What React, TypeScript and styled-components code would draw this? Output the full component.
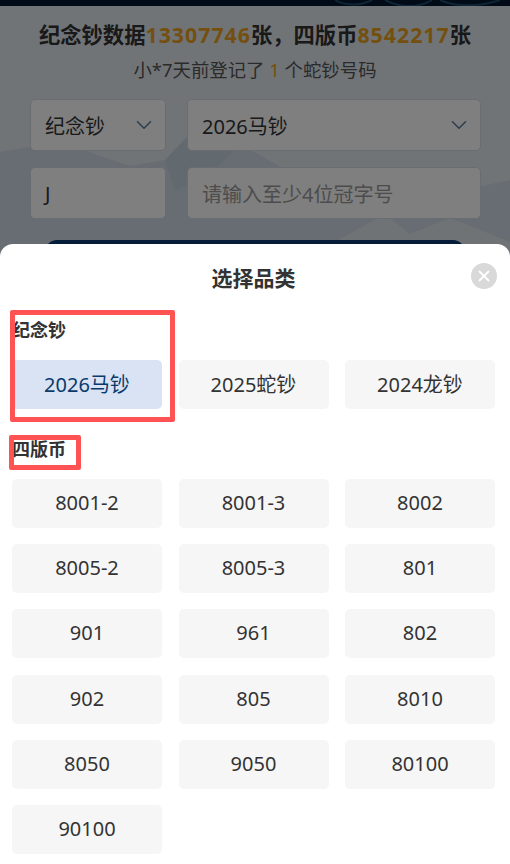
import styled, { createGlobalStyle } from 'styled-components';
import { ChevronDown, X } from 'lucide-react';

const GlobalStyle = createGlobalStyle`
  html, body {
    margin: 0;
    padding: 0;
    background: #fff;
  }
  * {
    box-sizing: border-box;
  }
`;

const Screen = styled.div`
  position: relative;
  width: 510px;
  height: 864px;
  overflow: hidden;
  font-family: 'Noto Sans', 'Noto Sans CJK SC', sans-serif;
  background: linear-gradient(180deg, #e2e8ee 0%, #dfe8f2 100%);
`;

const Hero = styled.div`
  width: 100%;
  height: 6px;
  background: #02142f;
  overflow: hidden;
`;

const HeroPattern = styled.svg`
  display: block;
  width: 510px;
  height: 6px;
`;

const Scenery = styled.svg`
  position: absolute;
  left: 0;
  top: 130px;
  width: 510px;
  height: 120px;
`;

const Content = styled.div`
  position: relative;
  display: flex;
  flex-direction: column;
  align-items: center;
`;

const Stats = styled.div`
  margin-top: 14px;
  font-size: 21.3px;
  line-height: 30px;
  font-weight: 700;
  color: #333;
  white-space: nowrap;
`;

const Accent = styled.span<{ $regular?: boolean }>`
  color: #e8a020;
  letter-spacing: ${(p) => (p.$regular ? '0' : '1px')};
`;

const Recent = styled.div`
  margin-top: 7px;
  font-size: 18.4px;
  line-height: 26px;
  color: #555;
  white-space: nowrap;
`;

const Form = styled.div`
  margin-top: 16px;
  align-self: flex-start;
  margin-left: 30px;
  display: grid;
  grid-template-columns: 136px 294px;
  column-gap: 21px;
  row-gap: 16px;
`;

const Field = styled.div`
  height: 52px;
  padding: 0 14px;
  display: flex;
  align-items: center;
  justify-content: space-between;
  background: #fff;
  border: 1px solid #d3dbe4;
  border-radius: 5px;
  font-size: 20px;
  color: #333;
`;

const Placeholder = styled.span`
  color: #999;
`;

const Chevron = styled(ChevronDown)`
  color: #5e7f9e;
  flex: none;
  margin-right: -6px;
`;

const Submit = styled.div`
  margin-top: 21px;
  width: 420px;
  height: 52px;
  border-radius: 12px;
  background: #0a3a70;
`;

const Overlay = styled.div`
  position: absolute;
  inset: 0;
  background: rgba(0, 0, 0, 0.5);
`;

const Sheet = styled.div`
  position: absolute;
  left: 0;
  right: 0;
  top: 244px;
  bottom: 0;
  padding: 0 15px 0 12px;
  background: #fff;
  border-radius: 13px 13px 0 0;
`;

const SheetTitle = styled.div`
  height: 74px;
  padding-top: 20px;
  text-align: center;
  font-size: 21px;
  line-height: 28px;
  font-weight: 700;
  color: #333;
`;

const CloseButton = styled.div`
  position: absolute;
  top: 19px;
  right: 13px;
  width: 26px;
  height: 26px;
  border-radius: 50%;
  background: #d9d9d9;
  color: #fff;
  display: flex;
  align-items: center;
  justify-content: center;
`;

const GroupTitle = styled.div`
  height: 24px;
  margin-bottom: 18px;
  font-size: 18px;
  line-height: 24px;
  font-weight: 700;
  color: #333;
`;

const Options = styled.div`
  display: grid;
  grid-template-columns: repeat(3, 150px);
  column-gap: 16.5px;
  row-gap: 16.2px;
  margin-bottom: 28px;
`;

const Option = styled.div<{ $active?: boolean }>`
  height: 49px;
  padding-bottom: 2px;
  display: flex;
  align-items: center;
  justify-content: center;
  border-radius: 5px;
  font-size: 20px;
  color: ${(p) => (p.$active ? '#0a3a6b' : '#333')};
  background: ${(p) => (p.$active ? '#d9e3f3' : '#f6f6f6')};
`;

const Annotation = styled.div<{ $left: number; $top: number; $width: number; $height: number }>`
  position: absolute;
  left: ${(p) => p.$left}px;
  top: ${(p) => p.$top}px;
  width: ${(p) => p.$width}px;
  height: ${(p) => p.$height}px;
  border: 5px solid #ff5252;
  border-radius: 2px;
`;

const commemorative = ['2026马钞', '2025蛇钞', '2024龙钞'];
const fourthSeries = [
  '8001-2', '8001-3', '8002',
  '8005-2', '8005-3', '801',
  '901', '961', '802',
  '902', '805', '8010',
  '8050', '9050', '80100',
  '90100',
];

export default function App() {
  return (
    <Screen>
      <GlobalStyle />
      <Scenery viewBox="0 0 510 120">
        <path d="M0 22 L60 12 L130 36 L165 30 L190 4 L215 1 L240 14 L300 48 L380 78 L510 50 L510 120 L0 120 Z" fill="#cfdbe4" />
        <path d="M165 30 L190 4 L215 1 L240 14 L205 50 L175 60 Z" fill="#c4d3de" />
        <path d="M320 120 L385 84 L410 104 L450 88 L510 112 L510 120 Z" fill="#e0e6ea" />
      </Scenery>
      <Content>
        <Hero>
          <HeroPattern viewBox="0 0 510 6">
            <path d="M335 0 C345 6 360 6 372 0 M385 0 C400 8 420 8 432 0 M440 0 C455 7 480 7 500 0" fill="none" stroke="#1c4a6b" strokeWidth="2" />
          </HeroPattern>
        </Hero>
        <Stats>
          纪念钞数据<Accent>13307746</Accent>张，四版币<Accent>8542217</Accent>张
        </Stats>
        <Recent>
          小*7天前登记了 <Accent $regular>1</Accent> 个蛇钞号码
        </Recent>
        <Form>
          <Field>
            纪念钞
            <Chevron size={26} strokeWidth={1.5} />
          </Field>
          <Field>
            2026马钞
            <Chevron size={26} strokeWidth={1.5} />
          </Field>
          <Field>J</Field>
          <Field>
            <Placeholder>请输入至少4位冠字号</Placeholder>
          </Field>
        </Form>
        <Submit />
      </Content>
      <Overlay />
      <Sheet>
        <SheetTitle>选择品类</SheetTitle>
        <CloseButton>
          <X size={18} strokeWidth={2.5} />
        </CloseButton>
        <GroupTitle>纪念钞</GroupTitle>
        <Options>
          {commemorative.map((name, index) => (
            <Option key={name} $active={index === 0}>
              {name}
            </Option>
          ))}
        </Options>
        <GroupTitle>四版币</GroupTitle>
        <Options>
          {fourthSeries.map((name) => (
            <Option key={name}>{name}</Option>
          ))}
        </Options>
      </Sheet>
      <Annotation $left={10} $top={310} $width={165} $height={112} />
      <Annotation $left={9} $top={435} $width={72} $height={35} />
    </Screen>
  );
}
